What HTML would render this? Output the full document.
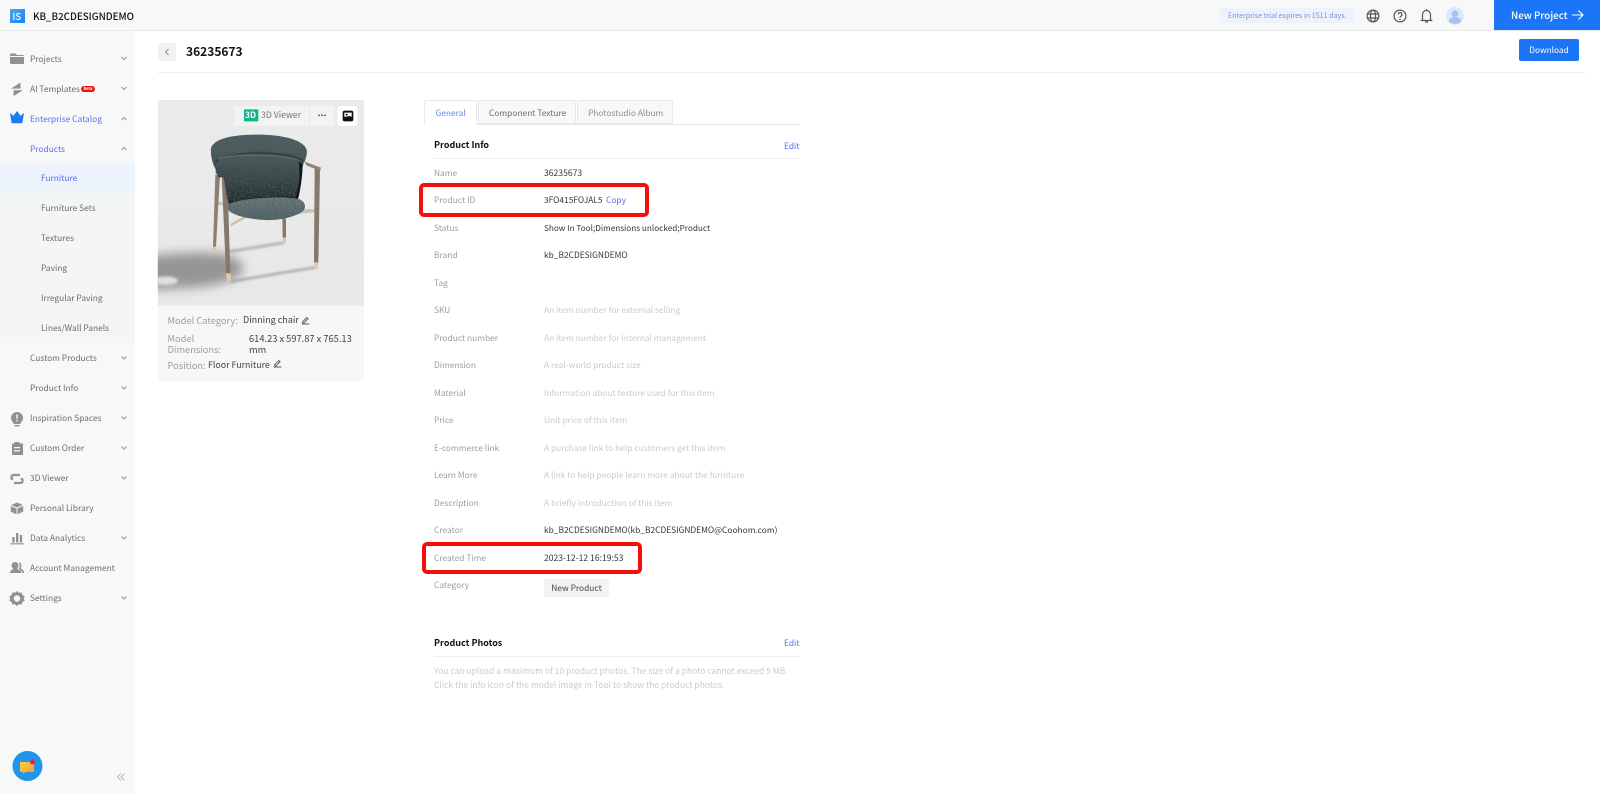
<!DOCTYPE html>
<html lang="en"><head><meta charset="utf-8"><title>Product</title>
<style>
html,body{margin:0;padding:0;width:1600px;height:794px;overflow:hidden;background:#fff}
body{position:relative;font-family:"Noto Sans CJK SC","Liberation Sans",sans-serif;font-size:8.4px;color:#33353a;font-weight:400}
.a{position:absolute}
.t{position:absolute;white-space:nowrap;transform:translateY(-50%);line-height:14px}
.s{color:#696b70}.b{color:#5b6cf0}
.l{color:#9b9da1;left:434px}.v{color:#33353a;left:544px}.p{color:#c9cacc;left:544px}
.m{font-size:9.3px}
svg{display:block}
</style></head><body>
<div class="a" style="left:0;top:0;width:1600px;height:30px;background:#f7f9f9;border-bottom:1px solid #e6e8e8;box-sizing:content-box"></div>
<div class="a" style="left:0;top:31px;width:135px;height:763px;background:#f7f9f9"></div>
<div class="a" style="left:0;top:163px;width:135px;height:30px;background:#edf3fb"></div>
<div class="a" style="left:0;top:193px;width:135px;height:150px;background:#f4f6f6"></div>

<div class="a" style="left:10px;top:9px;width:15px;height:14px;background:linear-gradient(135deg,#4aa8f5,#1a80f0)"></div>
<div class="t" style="left:12.500px;top:15.500px;color:#fff;font-size:9.500px;font-weight:500">IS</div>
<div class="t" style="left:33px;top:15.5px;font-size:9.8px;font-weight:500;color:#111">KB_B2CDESIGNDEMO</div>

<div class="t" style="left:30px;top:58.5px;color:#696b70">Projects</div>
<div class="t" style="left:30px;top:88.5px;color:#696b70">AI Templates</div>
<div class="a" style="left:81px;top:85.5px;width:14px;height:6px;border-radius:3px;background:#f01010;color:#fff;font-size:4px;line-height:6px;text-align:center;font-weight:700">Beta</div>
<div class="t b" style="left:30px;top:118.5px">Enterprise Catalog</div>
<div class="t b" style="left:30px;top:148.5px">Products</div>
<div class="t b" style="left:41px;top:178px">Furniture</div>
<div class="t s" style="left:41px;top:208px">Furniture Sets</div>
<div class="t s" style="left:41px;top:238px">Textures</div>
<div class="t s" style="left:41px;top:268px">Paving</div>
<div class="t s" style="left:41px;top:298px">Irregular Paving</div>
<div class="t s" style="left:41px;top:328px">Lines/Wall Panels</div>
<div class="t s" style="left:30px;top:358px">Custom Products</div>
<div class="t s" style="left:30px;top:388px">Product Info</div>
<div class="t s" style="left:30px;top:418px">Inspiration Spaces</div>
<div class="t s" style="left:30px;top:448px">Custom Order</div>
<div class="t s" style="left:30px;top:478px">3D Viewer</div>
<div class="t s" style="left:30px;top:508px">Personal Library</div>
<div class="t s" style="left:30px;top:538px">Data Analytics</div>
<div class="t s" style="left:30px;top:568px">Account Management</div>
<div class="t s" style="left:30px;top:598px">Settings</div>

<!-- sidebar icons and chevrons -->
<svg class="a" style="left:0;top:30px" width="135" height="600" viewBox="0 30 135 600">
<g fill="#8f9193">
<path d="M10 54.5a1 1 0 0 1 1-1h4.500l1.500 1.500H23a1 1 0 0 1 1 1V56H10zM10 57h14v6a1 1 0 0 1-1 1H11a1 1 0 0 1-1-1z"/>
<path d="M11 88.600L19.500 83h1v5.600zM23 90.200L14.500 95.500h-1v-5.300z"/>
<path fill="#1a7cf5" d="M10 113l3.500 2.800L17 111l3.500 4.800L24 113l-1.500 9.500a1 1 0 0 1-1 .8h-9a1 1 0 0 1-1-.8z"/>
<path d="M17 412a6 6 0 0 1 3.500 10.900V424h-7v-1.100A6 6 0 0 1 17 412zM14.500 425h5v.5a1 1 0 0 1-1 1h-3a1 1 0 0 1-1-1z"/>
<path d="M16.300 414.500h1.400v4.500h-1.400zM16.300 420h1.400v1.400h-1.400z" fill="#f7f9f9"/>
<path d="M14.500 443.500V442h5v1.500h3.500V455H12v-11.500zM14 447v1.200h6V447zm0 3.300v1.200h6v-1.200z" fill-rule="evenodd"/>
<path d="M17 502.500l5.800 2.500L17 507.500l-5.800-2.500zM10.800 506l5.700 2.500v5.700l-5.700-2.500zM23.200 506v5.700l-5.700 2.500v-5.700z"/>
<path d="M16 533h2.300v9.500H16zM12.300 537h2.300v5.500h-2.300zM19.800 535h2.300v7.500h-2.300zM10.500 543.200h13.200v1.200H10.500z"/>
<path d="M15 562a3.500 3.500 0 0 1 3.500 3.500c0 1.700-.8 2.600-1.300 3.200.5.900 4.300 1.300 4.300 4.300H10c0-3 2.800-3.400 3.200-4.300-.7-.6-1.700-1.500-1.700-3.200a3.500 3.500 0 0 1 3.500-3.500z"/>
<path d="M19 562.500a3.200 3.200 0 0 1 1.500 5.500c.5.800 3.500 1.300 3.500 5h-1.600c-.3-2.600-3-3-3.700-4.200.7-1 1.200-2 1-3.500-.1-1-.5-1.900-1.100-2.500z"/>
<path d="M17 592l2 1.700 2.700-.2.700 2.500 2.300 1.400-1 2.100 1 2.100-2.300 1.400-.7 2.500-2.700-.2-2 1.700-2-1.700-2.700.2-.7-2.500-2.300-1.400 1-2.100-1-2.100 2.300-1.400.7-2.500 2.700.2zm0 4.300a3.200 3.200 0 1 0 0 6.400 3.200 3.200 0 0 0 0-6.400z" fill-rule="evenodd" transform="translate(0 -1)"/>
</g>
<path d="M20 475h-6.500a2 2 0 0 0-2 2v1.500l1.500 1M14 483h6.500a2 2 0 0 0 2-2v-1.500l-1.500-1" fill="none" stroke="#8f9193" stroke-width="2.200"/>
<g fill="none" stroke="#a8aaac" stroke-width="1.400">
<path d="M121.500 57l2.500 2.500 2.500-2.500M121.500 87l2.500 2.500 2.500-2.500M121.500 356.500l2.500 2.500 2.500-2.500M121.500 386.500l2.500 2.500 2.500-2.500M121.500 416.500l2.500 2.500 2.500-2.500M121.500 446.500l2.500 2.500 2.500-2.500M121.500 476.500l2.500 2.500 2.500-2.500M121.500 536.500l2.500 2.500 2.500-2.500M121.500 596.500l2.500 2.500 2.500-2.500"/>
<path d="M121.500 120l2.500-2.500 2.500 2.500M121.500 150l2.500-2.500 2.500 2.500"/>
</g>
</svg>

<svg class="a" style="left:10px;top:749px" width="35" height="35" viewBox="0 0 35 35">
<defs><linearGradient id="ch" x1="0" y1="0" x2="1" y2="1"><stop offset="0" stop-color="#fdd03a"/><stop offset="1" stop-color="#f79a35"/></linearGradient></defs>
<circle cx="17.500" cy="17" r="15" fill="#1f96ec"/>
<path d="M11 13h12a1 1 0 0 1 1 1v8a1 1 0 0 1-1 1h-7.500l-2.500 2v-2h-2a1 1 0 0 1-1-1v-8a1 1 0 0 1 1-1z" fill="url(#ch)"/>
<circle cx="22.500" cy="13" r="2.500" fill="#e8214f"/>
</svg>
<svg class="a" style="left:115px;top:770px" width="14" height="14" viewBox="0 0 14 14"><path d="M6 3.500L2.500 7 6 10.500M9.500 3.500L6 7l3.500 3.500" fill="none" stroke="#b8babc" stroke-width="1"/></svg>

<!-- top right -->
<div class="a" style="left:1220px;top:8px;width:133px;height:15px;background:#edf2fb;border-radius:2px"></div>
<div class="t" style="left:1228px;top:15.500px;font-size:7.100px;color:#7f8fe0">Enterprise trial expires in 1511 days.</div>
<svg class="a" style="left:1365px;top:7px" width="118" height="18" viewBox="0 0 118 18">
<g fill="none" stroke="#55575a" stroke-width="1.200">
<circle cx="8" cy="9" r="5.900"/><ellipse cx="8" cy="9" rx="2.600" ry="5.900"/><path d="M2.200 7h11.600M2.200 11h11.600"/>
<circle cx="35" cy="9" r="5.900"/><path d="M33.200 7.500a1.900 1.900 0 1 1 2.800 1.700c-.7.400-1 .8-1 1.500"/>
<path d="M57.500 12.500V7.500a4 4 0 0 1 8 0v5l1 1h-10zM60 15h3M61.500 2v1.500"/>
</g>
<circle cx="35" cy="12.500" r=".8" fill="#55575a"/>
<circle cx="90" cy="9" r="9" fill="#dfe8f8"/>
<circle cx="90" cy="6.800" r="3.300" fill="#a8c0f5"/>
<path d="M84 14c0-3 2.500-3.800 6-3.800s6 .8 6 3.800a6 3 0 0 1-12 0z" fill="#a8c0f5"/>
</svg>
<div class="a" style="left:1494px;top:0;width:106px;height:30px;background:#1a76f7"></div>
<div class="t" style="left:1511px;top:15px;color:#fff;font-size:9.800px;font-weight:500">New Project</div>
<svg class="a" style="left:1570px;top:8px" width="15" height="14" viewBox="0 0 15 14"><path d="M2 7h11M8.500 2.500L13 7l-4.500 4.500" fill="none" stroke="#fff" stroke-width="1.100"/></svg>

<!-- header -->
<div class="a" style="left:158px;top:43px;width:18px;height:18px;background:#f1f2f3;border-radius:2px"></div>
<svg class="a" style="left:158px;top:43px" width="18" height="18" viewBox="0 0 18 18"><path d="M10.500 6L7.500 9l3 3" fill="none" stroke="#8a8c8f" stroke-width="1"/></svg>
<div class="t" style="left:186px;top:52px;font-size:12px;font-weight:700;color:#111">36235673</div>
<div class="a" style="left:158px;top:72px;width:1427px;height:1px;background:#eeeff0"></div>
<div class="a" style="left:1519px;top:39px;width:60px;height:22px;background:#1a76f7;border-radius:2px;color:#fff;font-size:8.300px;line-height:22px;text-align:center">Download</div>

<!-- product panel -->
<div class="a" style="left:158px;top:100px;width:206px;height:281px;background:#f6f8f8;border-radius:2px"></div>
<svg class="a" style="left:150px;top:90px" width="230" height="300" viewBox="0 0 690 900">
<defs>
<filter id="b1" x="-30%" y="-50%" width="160%" height="200%"><feGaussianBlur stdDeviation="16"/></filter>
<filter id="b2" x="-20%" y="-200%" width="140%" height="500%"><feGaussianBlur stdDeviation="4"/></filter>
<filter id="b3" x="-10%" y="-60%" width="120%" height="220%"><feGaussianBlur stdDeviation="2.500"/></filter>
<filter id="n" x="0" y="0" width="100%" height="100%"><feTurbulence type="fractalNoise" baseFrequency=".18" numOctaves="3" seed="4" result="t"/><feColorMatrix in="t" values="0 0 0 0 .08  0 0 0 0 .11  0 0 0 0 .11  0 0 0 2 -.85" result="d"/><feComposite in="d" in2="SourceGraphic" operator="in" result="c"/><feMerge><feMergeNode in="SourceGraphic"/><feMergeNode in="c"/></feMerge></filter>
<linearGradient id="bg" x1="0" y1="0" x2="0" y2="1"><stop offset="0" stop-color="#ebebeb"/><stop offset="1" stop-color="#e8e8e8"/></linearGradient>
<linearGradient id="back" x1="0" y1="0" x2="0" y2="1"><stop offset="0" stop-color="#4f6060"/><stop offset=".6" stop-color="#475857"/><stop offset="1" stop-color="#36444a"/></linearGradient>
<linearGradient id="inner" x1="0" y1="0" x2="0" y2="1"><stop offset="0" stop-color="#4b5c5b"/><stop offset=".55" stop-color="#364443"/><stop offset="1" stop-color="#1b2524"/></linearGradient>
<linearGradient id="seat" x1="0" y1="0" x2="0" y2="1"><stop offset="0" stop-color="#6b7b7c"/><stop offset="1" stop-color="#53646a"/></linearGradient>
<clipPath id="cp"><path d="M23 38a8 8 0 0 1 8-8h603a8 8 0 0 1 8 8v609H23z"/></clipPath>
</defs>
<g clip-path="url(#cp)">
<rect x="23" y="30" width="619" height="617" fill="url(#bg)"/>
<path d="M-10 498C80 488 170 484 215 492C265 502 300 527 265 560C225 588 110 598 -10 598Z" fill="#959595" filter="url(#b1)"/>
<ellipse cx="48" cy="572" rx="36" ry="13" fill="#dedede" filter="url(#b2)"/>
<path d="M240 575L495 532" stroke="#9a9a9a" stroke-width="6" filter="url(#b2)"/>
<path d="M235 485L402 458" stroke="#a5a5a5" stroke-width="7" filter="url(#b2)"/>
<path d="M205 335L240 340 235 347 205 345ZM455 358L497 357 497 366 445 372Z" fill="#bccbb4"/>
<path d="M240 402L285 376 292 382 245 408Z" fill="#d2c2ac"/>
<path d="M397 385L408 385 408 443 398 443Z" fill="#85786c"/><path d="M398 443H408L408 459H400Z" fill="#ddc8a4"/>
<path d="M196 255L210 255 198 470 189 470Z" fill="#8f7e70"/><path d="M189 470H198L198 488H187Z" fill="#dcc7a3"/>
<path d="M494 235L510 238 505 517 492 517Z" fill="#85786c"/><path d="M492 517H505L503 537H493Z" fill="#dfcba8"/>
<path d="M215 258L232 258 241 550 228 550Z" fill="#85786c"/><path d="M228 550H242L243 574H231Z" fill="#e0cba8"/>
<path d="M197 238L230 246 232 262 213 258 197 252Z" fill="#85786c"/>
<path d="M462 214L513 233 510 243 470 226Z" fill="#94836f"/>
<path d="M183 175C190 150 235 134 320 134C400 134 462 150 470 180C472 195 467 208 460 222L448 262 205 262 196 236C188 222 181 198 183 175Z" fill="url(#back)" filter="url(#n)"/>
<path d="M196 215C260 180 400 182 460 212" fill="none" stroke="#2a3635" stroke-width="5" filter="url(#b3)"/>
<path d="M205 206C260 188 400 190 448 210C456 216 450 240 448 270C446 295 445 312 436 325C380 318 290 322 236 342C226 300 222 265 218 240C214 226 206 218 205 206Z" fill="url(#inner)" filter="url(#n)"/>
<path d="M207 206C260 190 400 192 446 211" fill="none" stroke="#687878" stroke-width="2.500"/>
<path d="M445 215C452 240 448 290 436 326L444 328C452 300 458 250 458 222Z" fill="#10181a"/>
<path d="M236 342C290 323 380 318 436 325" fill="none" stroke="#0e1413" stroke-width="4"/>
<path d="M235 342C280 323 400 315 450 328C465 336 468 350 462 360C445 378 395 392 345 390C295 388 248 375 237 362C232 355 232 348 235 342Z" fill="url(#seat)" filter="url(#n)"/>
</g>
<rect x="254" y="48" width="298" height="60" rx="3" fill="#f2f3f3"/>
<rect x="478" y="48" width="1.500" height="60" fill="#dfe0e0"/>
<rect x="562" y="48" width="60" height="60" rx="6" fill="#fff"/>
<rect x="282" y="58" width="43" height="36" rx="2" fill="#12b08c"/>
<circle cx="507" cy="76" r="2.400" fill="#333"/><circle cx="516" cy="76" r="2.400" fill="#333"/><circle cx="525" cy="76" r="2.400" fill="#333"/>
<rect x="578" y="62" width="32" height="32" rx="6" fill="#111"/>
<path d="M583 68h22v13c-4-4-9-4-13-1-3-1-6 0-9 1z" fill="#fff"/><circle cx="590" cy="74" r="3" fill="#111"/>
</svg>
<div class="t" style="left:245px;top:115px;color:#fff;font-size:8.500px;font-weight:700">3D</div>
<div class="t" style="left:261px;top:115px;color:#717377;font-size:8.700px">3D Viewer</div>

<div class="t m" style="left:167.500px;top:320px;color:#9b9da1">Model Category:</div>
<div class="t m" style="left:243px;top:320px;color:#3f4145;font-size:9px">Dinning chair</div>
<div class="t m" style="left:167.500px;top:337.500px;color:#9b9da1">Model</div>
<div class="t m" style="left:167.500px;top:348.500px;color:#9b9da1">Dimensions:</div>
<div class="t m" style="left:249px;top:337.500px;color:#3f4145">614.23 x 597.87 x 765.13</div>
<div class="t m" style="left:249px;top:348.500px;color:#3f4145">mm</div>
<div class="t m" style="left:167.500px;top:364.500px;color:#9b9da1">Position:</div>
<div class="t m" style="left:208px;top:364.500px;color:#3f4145;font-size:8.850px">Floor Furniture</div>
<svg class="a" style="left:301px;top:315px" width="10" height="10" viewBox="0 0 12 12"><path d="M2 8l5-5 1.500 1.500-5 5H2zM1 10.800h9" fill="none" stroke="#55575a" stroke-width="1.100"/></svg>
<svg class="a" style="left:272.500px;top:358px" width="10" height="10" viewBox="0 0 12 12"><path d="M2 8l5-5 1.500 1.500-5 5H2zM1 10.800h9" fill="none" stroke="#55575a" stroke-width="1.100"/></svg>

<!-- tabs -->
<div class="a" style="left:424px;top:124px;width:376px;height:1px;background:#e6e7e8"></div>
<div class="a" style="left:424px;top:100px;width:53px;height:25px;box-sizing:border-box;border:1px solid #e8e9ea;border-bottom:0;background:#fff;border-radius:2px 2px 0 0"></div>
<div class="a" style="left:478px;top:100px;width:98px;height:24px;box-sizing:border-box;border:1px solid #e8e9ea;background:#f7f8f8;border-radius:2px 2px 0 0"></div>
<div class="a" style="left:577px;top:100px;width:96px;height:24px;box-sizing:border-box;border:1px solid #e8e9ea;background:#f7f8f8;border-radius:2px 2px 0 0"></div>
<div class="t" style="left:435.500px;top:112.500px;color:#5b8cf0">General</div>
<div class="t" style="left:489px;top:112.500px;color:#696b70">Component Texture</div>
<div class="t" style="left:588px;top:112.500px;color:#8b8d90">Photostudio Album</div>

<div class="t" style="left:434px;top:145px;font-size:9px;font-weight:700;color:#111">Product Info</div>
<div class="t b" style="left:784px;top:145.500px">Edit</div>
<div class="a" style="left:434px;top:158px;width:366px;height:1px;background:#eeeff0"></div>

<div class="t l" style="top:172.500px">Name</div><div class="t v" style="top:172.500px;font-size:8.600px">36235673</div>
<div class="t l" style="top:200px">Product ID</div><div class="t v" style="top:200px">3FO415FOJAL5</div><div class="t b" style="left:606px;top:200px">Copy</div>
<div class="t l" style="top:227.500px">Status</div><div class="t v" style="top:227.500px;font-size:8.200px">Show In Tool;Dimensions unlocked;Product</div>
<div class="t l" style="top:255px">Brand</div><div class="t v" style="top:255px">kb_B2CDESIGNDEMO</div>
<div class="t l" style="top:282.500px">Tag</div>
<div class="t l" style="top:310px">SKU</div><div class="t p" style="top:310px">An item number for external selling</div>
<div class="t l" style="top:337.500px">Product number</div><div class="t p" style="top:337.500px">An item number for internal management</div>
<div class="t l" style="top:365px">Dimension</div><div class="t p" style="top:365px">A real-world product size</div>
<div class="t l" style="top:392.500px">Material</div><div class="t p" style="top:392.500px">Information about texture used for this item</div>
<div class="t l" style="top:420px">Price</div><div class="t p" style="top:420px">Unit price of this item</div>
<div class="t l" style="top:447.500px">E-commerce link</div><div class="t p" style="top:447.500px">A purchase link to help customers get this item</div>
<div class="t l" style="top:475px">Learn More</div><div class="t p" style="top:475px">A link to help people learn more about the furniture</div>
<div class="t l" style="top:503px">Description</div><div class="t p" style="top:503px">A briefly introduction of this item</div>
<div class="t l" style="top:530px">Creator</div><div class="t v" style="top:530px">kb_B2CDESIGNDEMO(kb_B2CDESIGNDEMO@Coohom.com)</div>
<div class="t l" style="top:558px">Created Time</div><div class="t v" style="top:558px;font-size:8.600px">2023-12-12 16:19:53</div>
<div class="t l" style="top:585px">Category</div>
<div class="a" style="left:544px;top:579px;width:65px;height:18px;background:#f2f3f3;border-radius:2px;text-align:center;line-height:18px;color:#3f4145">New Product</div>

<div class="a" style="left:419px;top:183px;width:230px;height:34px;box-sizing:border-box;border:4.500px solid #f40f0f;border-radius:5px"></div>
<div class="a" style="left:422px;top:542px;width:220px;height:32px;box-sizing:border-box;border:4.500px solid #f40f0f;border-radius:5px"></div>

<div class="t" style="left:434px;top:642.500px;font-size:9px;font-weight:700;color:#111">Product Photos</div>
<div class="t b" style="left:784px;top:643px">Edit</div>
<div class="a" style="left:434px;top:656px;width:366px;height:1px;background:#eeeff0"></div>
<div class="t" style="left:434px;top:671px;font-size:8.500px;color:#c9cacc">You can upload a maximum of 10 product photos. The size of a photo cannot exceed 5 MB.</div>
<div class="t" style="left:434px;top:684.500px;font-size:8.500px;color:#c9cacc">Click the info icon of the model image in Tool to show the product photos.</div>
</body></html>
